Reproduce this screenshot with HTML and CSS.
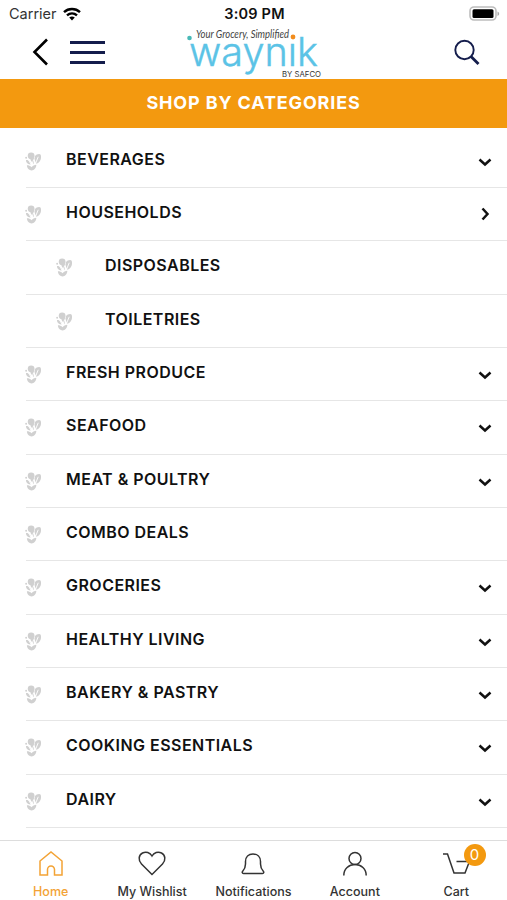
FILE: index.html
```html
<!DOCTYPE html>
<html lang="en">
  <head>
    <meta charset="utf-8" />
    <title>Waynik - Shop by Categories</title>
    <link rel="stylesheet" href="styles.css">
  </head>
  <body>
    <svg class="sprite">
      <symbol id="leaf" viewBox="0 0 18 20">
        <circle cx="6.500" cy="4" r="3.600" />
        <circle cx="1.200" cy="6" r="1" />
        <path d="M10.500 4.500C12 2 16 1.500 16.700 3c1 4-.7 8-4.700 9.500-1.500-2-2-5-1.500-8z" />
        <path d="M1 8.500c2.500-.5 4.500 1 5.500 4.500C3 13.500 1 11.500 1 8.500zM5.500 8l3.500 5L10 6z" />
        <path d="M2 14c2 0 3.500.5 5 2 1-1.500 3-2.500 5-2.500 0 3.500-2.500 6-5 6S2 17 2 14z" />
        <path class="vein" d="M3.500 8l3.500 6 2.200-6 2 4L14 5" />
      </symbol>
      <symbol id="down" viewBox="0 0 14 14">
        <path d="M1.500 4.500L7 9.500l5.500-5" />
      </symbol>
      <symbol id="right" viewBox="0 0 14 14">
        <path d="M4.500 1.500l5 5.500-5 5.500" />
      </symbol>
    </svg>

    <header>
      <div class="status">
        <div class="carrier">
          Carrier
          <svg width="20" height="14" viewBox="0 0 20 14">
            <path d="M2 5.200c4.500-4.200 11.500-4.200 16 0M5 8.400c3-2.700 7-2.700 10 0" fill="none" stroke="#000" stroke-width="2.400" />
            <path d="M7.200 10.500c1.700-1.400 3.900-1.400 5.600 0L10 13.400z" />
          </svg>
        </div>
        <div class="time">3:09 PM</div>
        <svg class="battery" width="31" height="15" viewBox="0 0 31 15">
          <rect x="1" y="1" width="26" height="13" rx="4" fill="#fff" stroke="#bdbdbd" stroke-width="1.600" />
          <rect x="3.500" y="3.300" width="21" height="8.600" rx="1.500" />
          <path d="M28.500 5.500v4.500c2.200-.8 2.200-3.700 0-4.500z" fill="#aaa" />
        </svg>
      </div>
      <div class="topbar">
        <div class="left">
          <svg width="17" height="28" viewBox="0 0 17 28">
            <path d="M16 1.500L3.500 14 16 26.500" fill="none" stroke="#000" stroke-width="2.600" />
          </svg>
          <div class="menu"><span></span><span></span><span></span></div>
        </div>
        <svg class="logo" width="140" height="52" viewBox="0 0 140 52">
          <text class="tagline" x="10" y="11" textLength="93" lengthAdjust="spacingAndGlyphs">Your Grocery, Simplified</text>
          <text class="brand" x="3" y="38.500" textLength="129" lengthAdjust="spacingAndGlyphs">waynık</text>
          <circle cx="3.500" cy="11" r="2.300" fill="#49b9b7" />
          <circle cx="107" cy="10" r="2.400" fill="#f28c1c" />
          <text class="by" x="96" y="49.500" textLength="39" lengthAdjust="spacingAndGlyphs">BY SAFCO</text>
        </svg>
        <svg class="search" width="28" height="28" viewBox="0 0 28 28">
          <circle cx="11.500" cy="11" r="9.200" fill="none" stroke="#141d4c" stroke-width="1.900" />
          <path d="M18 17.500l7.500 7.500" stroke="#141d4c" stroke-width="2.800" />
        </svg>
      </div>
    </header>

    <h1>SHOP BY CATEGORIES</h1>

    <ul class="categories">
      <li><svg class="leaf"><use href="#leaf" /></svg><span>BEVERAGES</span><svg class="arrow"><use href="#down" /></svg></li>
      <li><svg class="leaf"><use href="#leaf" /></svg><span>HOUSEHOLDS</span><svg class="arrow open"><use href="#right" /></svg></li>
      <li class="sub"><svg class="leaf"><use href="#leaf" /></svg><span>DISPOSABLES</span></li>
      <li class="sub"><svg class="leaf"><use href="#leaf" /></svg><span>TOILETRIES</span></li>
      <li><svg class="leaf"><use href="#leaf" /></svg><span>FRESH PRODUCE</span><svg class="arrow"><use href="#down" /></svg></li>
      <li><svg class="leaf"><use href="#leaf" /></svg><span>SEAFOOD</span><svg class="arrow"><use href="#down" /></svg></li>
      <li><svg class="leaf"><use href="#leaf" /></svg><span>MEAT &amp; POULTRY</span><svg class="arrow"><use href="#down" /></svg></li>
      <li><svg class="leaf"><use href="#leaf" /></svg><span>COMBO DEALS</span></li>
      <li><svg class="leaf"><use href="#leaf" /></svg><span>GROCERIES</span><svg class="arrow"><use href="#down" /></svg></li>
      <li><svg class="leaf"><use href="#leaf" /></svg><span>HEALTHY LIVING</span><svg class="arrow"><use href="#down" /></svg></li>
      <li><svg class="leaf"><use href="#leaf" /></svg><span>BAKERY &amp; PASTRY</span><svg class="arrow"><use href="#down" /></svg></li>
      <li><svg class="leaf"><use href="#leaf" /></svg><span>COOKING ESSENTIALS</span><svg class="arrow"><use href="#down" /></svg></li>
      <li><svg class="leaf"><use href="#leaf" /></svg><span>DAIRY</span><svg class="arrow"><use href="#down" /></svg></li>
    </ul>

    <nav>
      <a class="active">
        <svg viewBox="0 0 30 30"><path d="M4 12L15 3l11 9v14h-7.500v-5.500a3.500 3.500 0 0 0-7 0V26H4z" /></svg>
        Home
      </a>
      <a>
        <svg viewBox="0 0 30 30"><path d="M15 25.500L4.500 15C1 11.500 1.500 6 5.500 4c3.500-1.800 7.500-.5 9.500 3 2-3.500 6-4.800 9.500-3 4 2 4.500 7.500 1 11z" /></svg>
        My Wishlist
      </a>
      <a>
        <svg viewBox="0 0 30 30"><path d="M5.500 24.500h19c1.500 0 1.500-1.500.8-2.300-2.300-2.500-2.800-4.200-2.800-7.200v-2.500c0-4.500-3-7.500-7.500-7.500s-7.500 3-7.500 7.500V15c0 3-.5 4.700-2.800 7.200-.7.800-.7 2.300.8 2.300z" /></svg>
        Notifications
      </a>
      <a>
        <svg viewBox="0 0 30 30"><circle cx="15" cy="9.500" r="6" /><path d="M3.800 26.500c0-6.500 5-11 11.200-11s11.200 4.500 11.200 11" /></svg>
        Account
      </a>
      <a>
        <svg viewBox="0 0 30 30"><path d="M2 5h4.500L13 24h11l5-13M15.500 12.500H29" /></svg>
        Cart
        <span class="badge">0</span>
      </a>
    </nav>
  </body>
</html>
```
FILE: styles.css
```css
* {
  box-sizing: border-box;
}

body {
  margin: 0;
  height: 900px;
  display: flex;
  flex-direction: column;
  overflow: hidden;
  background: #fff;
  color: #111;
  font-family: Inter, "Liberation Sans", sans-serif;
}

.sprite {
  display: none;
}

header {
  height: 79px;
  flex: none;
}

.status {
  height: 27px;
  display: grid;
  grid-template-columns: 1fr auto 1fr;
  align-items: center;
  padding: 0 7px 0 9px;
  font-size: 14.500px;
}

.carrier {
  display: flex;
  align-items: center;
  gap: 5px;
  color: #333;
}

.time {
  font-weight: 600;
  letter-spacing: 0.2px;
}

.battery {
  justify-self: end;
}

.topbar {
  height: 52px;
  display: grid;
  grid-template-columns: 1fr 140px 1fr;
  padding: 0 26px 0 31px;
}

.left {
  display: flex;
  align-items: center;
  gap: 22px;
  padding-bottom: 2px;
}

.menu {
  width: 35px;
  display: flex;
  flex-direction: column;
  gap: 7px;
}

.menu span {
  height: 3px;
  background: #141d4c;
}

.search {
  align-self: center;
  justify-self: end;
}

.logo {
  overflow: visible;
}

.tagline {
  font: italic 11px Lato, sans-serif;
  fill: #444;
}

.brand {
  font: 300 40px Inter, sans-serif;
  fill: #5bc3e6;
  stroke: #5bc3e6;
  stroke-width: 0.4;
}

.by {
  font: 7.500px Inter, sans-serif;
  fill: #333;
}

h1 {
  flex: none;
  height: 49px;
  margin: 0;
  background: #f3990f;
  color: #fff;
  font-size: 18px;
  font-weight: 700;
  line-height: 48px;
  letter-spacing: 0.850px;
  text-align: center;
}

.categories {
  flex: 1;
  min-height: 0;
  margin: 0;
  padding: 6.500px 0 0 26px;
  list-style: none;
}

.categories li {
  height: 53.350px;
  display: flex;
  align-items: center;
  border-bottom: 1px solid #e6e6e6;
  padding-right: 15px;
  font-size: 16px;
  font-weight: 600;
  letter-spacing: 0.470px;
}

.categories span {
  flex: 1;
  padding-bottom: 4px;
}

.leaf {
  width: 17px;
  height: 19px;
  margin: 1px 24px 0 -1px;
  fill: #d0d0d0;
}

.vein {
  fill: none;
  stroke: #fff;
  stroke-width: 1;
}

.sub .leaf {
  margin-left: 30px;
  margin-right: 32px;
}

.arrow {
  width: 14px;
  height: 14px;
  margin-top: 2px;
  fill: none;
  stroke: #111;
  stroke-width: 2.500;
}

.open {
  margin-top: 0;
}

nav {
  flex: none;
  height: 60px;
  display: grid;
  grid-template-columns: repeat(5, 1fr);
  border-top: 1px solid #ddd;
  background: #fff;
}

nav a {
  position: relative;
  display: flex;
  flex-direction: column;
  align-items: center;
  gap: 5px;
  padding-top: 8px;
  color: #333;
  font-size: 12.500px;
  font-weight: 500;
  line-height: 16px;
}

nav svg {
  width: 30px;
  height: 30px;
  fill: none;
  stroke: currentColor;
  stroke-width: 1.500;
}

nav .active {
  color: #f3a335;
}

.badge {
  position: absolute;
  top: 3px;
  left: 58px;
  width: 22px;
  height: 22px;
  border-radius: 50%;
  background: #f3990f;
  color: #fff;
  font-size: 15px;
  font-weight: 400;
  line-height: 22px;
  text-align: center;
}
```
